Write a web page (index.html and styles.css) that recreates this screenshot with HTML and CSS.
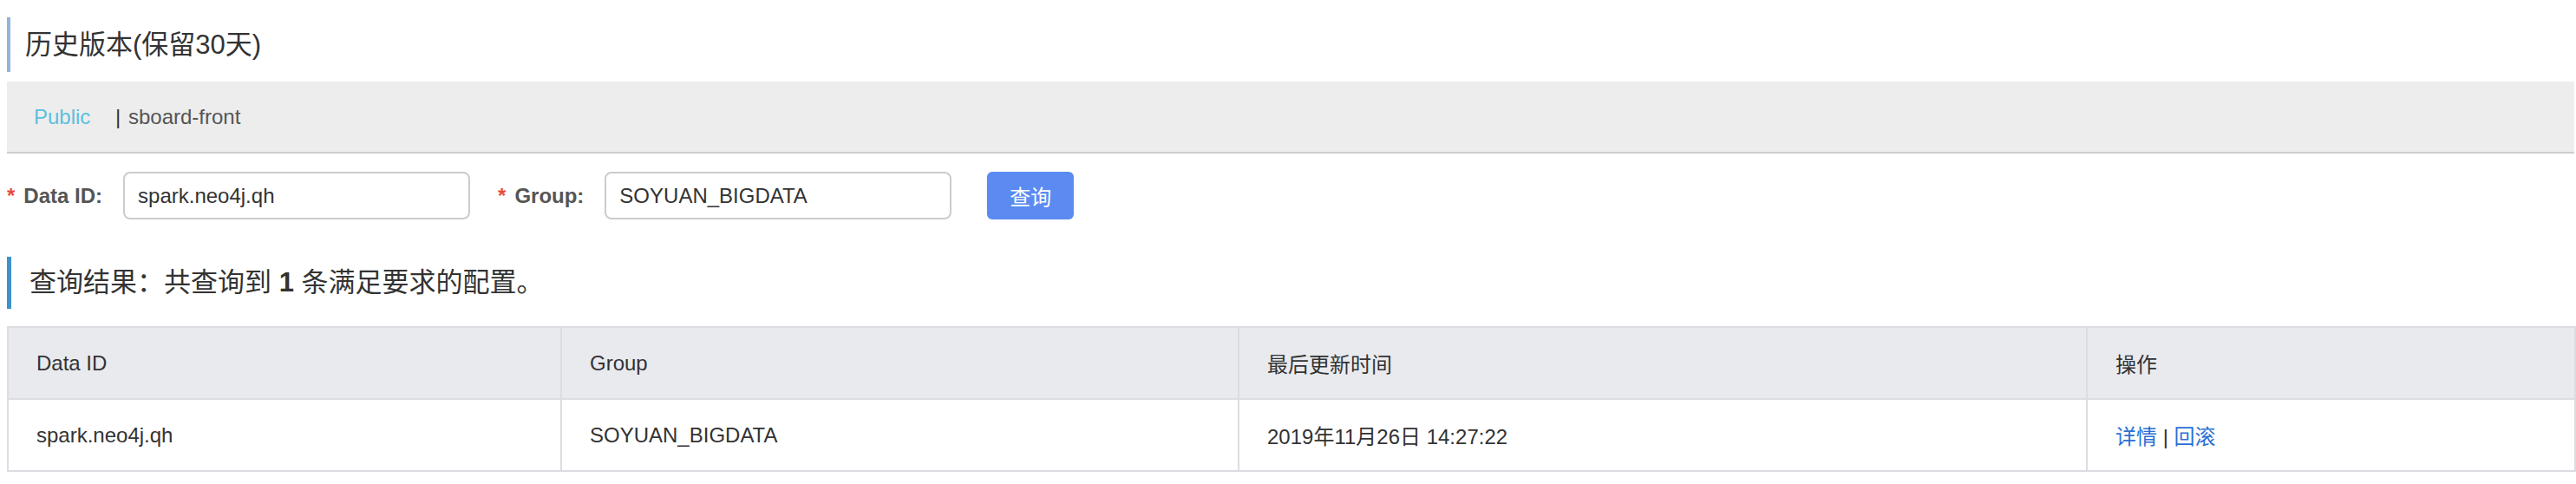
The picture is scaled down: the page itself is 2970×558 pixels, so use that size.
FILE: index.html
```html
<!DOCTYPE html>
<html lang="zh">
<head>
<meta charset="utf-8">
<title>历史版本</title>
<link rel="stylesheet" href="styles.css">
</head>
<body>
<div class="page">
  <h2 class="title">历史版本(保留30天)</h2>

  <div class="crumb">
    <span class="crumb-ns">Public</span>
    <span class="crumb-sep">|</span>
    <span class="crumb-name">sboard-front</span>
  </div>

  <form class="search">
    <div class="field">
      <label class="field-label"><span class="req">*</span>Data ID:</label>
      <input class="field-input" type="text" value="spark.neo4j.qh">
    </div>
    <div class="field">
      <label class="field-label"><span class="req">*</span>Group:</label>
      <input class="field-input" type="text" value="SOYUAN_BIGDATA">
    </div>
    <button class="btn" type="button">查询</button>
  </form>

  <h3 class="result-title">查询结果：共查询到 <b>1</b> 条满足要求的配置。</h3>

  <table class="grid">
    <colgroup>
      <col class="c1"><col class="c2"><col class="c3"><col class="c4">
    </colgroup>
    <thead>
      <tr><th>Data ID</th><th>Group</th><th>最后更新时间</th><th>操作</th></tr>
    </thead>
    <tbody>
      <tr>
        <td>spark.neo4j.qh</td>
        <td>SOYUAN_BIGDATA</td>
        <td>2019年11月26日 14:27:22</td>
        <td><a class="link" href="#">详情</a> <span class="bar">|</span> <a class="link" href="#">回滚</a></td>
      </tr>
    </tbody>
  </table>
</div>
</body>
</html>
```

FILE: styles.css
```css
html, body {
  margin: 0;
  padding: 0;
  background: #ffffff;
}
body {
  font-family: "Liberation Sans", "Noto Sans CJK SC", sans-serif;
  color: #333333;
}
.page {
  padding: 20px 2px 0 8px;
}
.title {
  margin: 0;
  height: 63px;
  line-height: 63px;
  border-left: 4px solid #8fb5dd;
  padding-left: 17px;
  font-size: 31px;
  font-weight: normal;
  color: #333333;
}
.crumb {
  margin-top: 11px;
  height: 81px;
  line-height: 81px;
  background: #ededed;
  border-bottom: 2px solid #cdcdcd;
  padding-left: 31px;
  font-size: 24px;
}
.crumb-ns {
  color: #5bc0de;
}
.crumb-sep {
  color: #333333;
  margin-left: 22px;
  margin-right: 2px;
}
.crumb-name {
  color: #555555;
}
.search {
  margin: 21px 0 0 0;
  display: flex;
  align-items: center;
  height: 55px;
}
.field {
  display: flex;
  align-items: center;
  margin-right: 32px;
}
.field-label {
  font-size: 24px;
  font-weight: bold;
  color: #555555;
  margin-right: 24px;
}
.req {
  color: #e74c3c;
  margin-right: 10px;
}
.field-input {
  box-sizing: border-box;
  width: 400px;
  height: 55px;
  border: 2px solid #cbcbd1;
  border-radius: 8px;
  padding: 0 15px;
  font-family: "Liberation Sans", "Noto Sans CJK SC", sans-serif;
  font-size: 24px;
  color: #333333;
  background: #ffffff;
  outline: none;
}
.btn {
  width: 100px;
  height: 55px;
  border: none;
  border-radius: 6px;
  background: #5b8bf1;
  color: #ffffff;
  font-family: "Noto Sans CJK SC", sans-serif;
  font-size: 24px;
  padding: 0;
  margin-left: 9px;
}
.result-title {
  margin: 43px 0 0 0;
  height: 60px;
  line-height: 60px;
  border-left: 5px solid #3d92c9;
  padding-left: 21px;
  font-size: 31px;
  font-weight: normal;
  color: #333333;
}
.result-title b {
  font-weight: bold;
}
.grid {
  margin-top: 20px;
  width: 2960px;
  table-layout: fixed;
  border-collapse: collapse;
  font-size: 24px;
  color: #333333;
}
.grid .c1 { width: 638px; }
.grid .c2 { width: 781px; }
.grid .c3 { width: 978px; }
.grid .c4 { width: 563px; }
.grid th,
.grid td {
  border: 2px solid #dcdde2;
  height: 81px;
  padding: 0 32px;
  text-align: left;
  vertical-align: middle;
  font-weight: normal;
}
.grid th {
  background: #e9eaee;
}
.grid td {
  background: #ffffff;
}
.link {
  color: #2b6fd4;
  text-decoration: none;
}
.bar {
  color: #333333;
}
```
